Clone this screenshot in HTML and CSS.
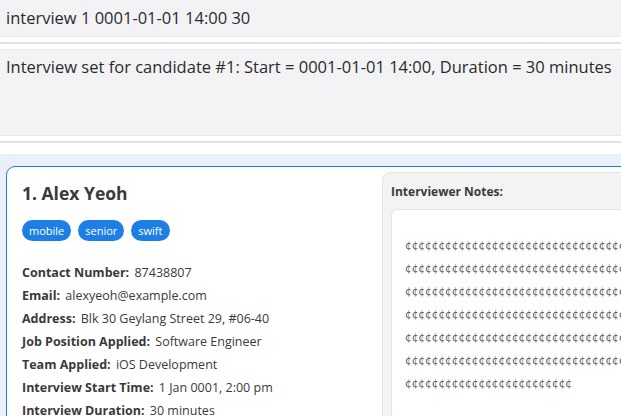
FILE: index.html
```html
<!DOCTYPE html>
<html>
<head>
<meta charset="utf-8">
<link rel="stylesheet" href="styles.css">
</head>
<body>
<div class="command">interview 1 0001-01-01 14:00 30</div>
<div class="split"></div>
<div class="result">Interview set for candidate #1: Start = 0001-01-01 14:00, Duration = 30 minutes</div>
<div class="split"></div>
<div class="list">
  <div class="card">
    <div class="info">
      <h1 class="name">1. Alex Yeoh</h1>
      <div class="tags">
        <span class="tag">mobile</span>
        <span class="tag">senior</span>
        <span class="tag">swift</span>
      </div>
      <div class="fields">
        <div class="field"><b>Contact Number:</b> 87438807</div>
        <div class="field"><b>Email:</b> alexyeoh@example.com</div>
        <div class="field"><b>Address:</b> Blk 30 Geylang Street 29, #06-40</div>
        <div class="field"><b>Job Position Applied:</b> Software Engineer</div>
        <div class="field"><b>Team Applied:</b> iOS Development</div>
        <div class="field"><b>Interview Start Time:</b> 1 Jan 0001, 2:00 pm</div>
        <div class="field"><b>Interview Duration:</b> 30 minutes</div>
      </div>
    </div>
    <div class="notes">
      <div class="notes-title">Interviewer Notes:</div>
      <div class="notes-body">
        <div class="notes-line">¢¢¢¢¢¢¢¢¢¢¢¢¢¢¢¢¢¢¢¢¢¢¢¢¢¢¢¢¢¢¢¢¢¢¢¢¢¢¢¢¢¢¢¢</div>
        <div class="notes-line">¢¢¢¢¢¢¢¢¢¢¢¢¢¢¢¢¢¢¢¢¢¢¢¢¢¢¢¢¢¢¢¢¢¢¢¢¢¢¢¢¢¢¢¢</div>
        <div class="notes-line">¢¢¢¢¢¢¢¢¢¢¢¢¢¢¢¢¢¢¢¢¢¢¢¢¢¢¢¢¢¢¢¢¢¢¢¢¢¢¢¢¢¢¢¢</div>
        <div class="notes-line">¢¢¢¢¢¢¢¢¢¢¢¢¢¢¢¢¢¢¢¢¢¢¢¢¢¢¢¢¢¢¢¢¢¢¢¢¢¢¢¢¢¢¢¢</div>
        <div class="notes-line">¢¢¢¢¢¢¢¢¢¢¢¢¢¢¢¢¢¢¢¢¢¢¢¢¢¢¢¢¢¢¢¢¢¢¢¢¢¢¢¢¢¢¢¢</div>
        <div class="notes-line">¢¢¢¢¢¢¢¢¢¢¢¢¢¢¢¢¢¢¢¢¢¢¢¢¢¢¢¢¢¢¢¢¢¢¢¢¢¢¢¢¢¢¢¢</div>
        <div class="notes-line">¢¢¢¢¢¢¢¢¢¢¢¢¢¢¢¢¢¢¢¢¢¢¢¢¢</div>
      </div>
    </div>
  </div>
</div>
</body>
</html>
```
FILE: styles.css
```css
html, body {
  margin: 0;
  padding: 0;
  overflow: hidden;
  width: 621px;
  height: 416px;
  background: #ffffff;
  font-family: "Open Sans", "Noto Sans", sans-serif;
  color: #333333;
}
.command {
  background: #f3f3f5;
  height: 37px;
  box-sizing: border-box;
  padding: 7px 6px 0;
  font-size: 16.5px;
  line-height: 22px;
  color: #2b2b2b;
  border-bottom: 1px solid #ececed;
}
.split {
  height: 2px;
  background: #e2e2e3;
  margin: 5px 0;
}
.result {
  background: #f3f3f5;
  height: 87px;
  box-sizing: border-box;
  padding: 6px 6px 0;
  font-size: 16.5px;
  line-height: 22px;
  color: #2b2b2b;
  border-top: 1px solid #e9e9ea;
  border-bottom: 1px solid #e9e9ea;
}
.list {
  margin-top: 11px;
  background: #e9effb;
  height: 300px;
  padding: 12px 0 0 6px;
  box-sizing: border-box;
}
.card {
  display: flex;
  width: 900px;
  background: #ffffff;
  border: 1.5px solid #1f7ae0;
  border-radius: 9px;
  height: 400px;
  box-sizing: border-box;
}
.info {
  width: 375px;
  flex: none;
  box-sizing: border-box;
  padding: 13px 15px;
}
.name {
  margin: 0;
  font-size: 17.5px;
  line-height: 26px;
  font-weight: 700;
  color: #3a3a3a;
}
.tags {
  display: flex;
  gap: 7px;
  margin-top: 14px;
}
.tag {
  background: #1d7fe6;
  color: #ffffff;
  font-size: 11px;
  line-height: 21px;
  padding: 0 7px;
  border-radius: 11px;
}
.fields {
  margin-top: 20px;
  font-size: 12.5px;
  line-height: 23px;
  color: #3a3a3a;
}
.field b {
  font-weight: 700;
  margin-right: 2px;
}
.notes {
  flex: 1;
  margin-top: 5px;
  background: #f3f3f4;
  border: 1px solid #e4e4e5;
  border-radius: 8px;
  padding: 10px 8px 7px;
}
.notes-title {
  font-size: 12px;
  font-weight: 700;
  line-height: 18px;
  color: #3a3a3a;
}
.notes-body {
  margin-top: 8px;
  background: #ffffff;
  border: 1px solid #e4e4e5;
  border-radius: 7px;
  padding: 24px 13px;
  font-family: "DejaVu Sans", "Open Sans", sans-serif;
  font-size: 10.5px;
  line-height: 23px;
  color: #5a5a5a;
  white-space: nowrap;
}
```
